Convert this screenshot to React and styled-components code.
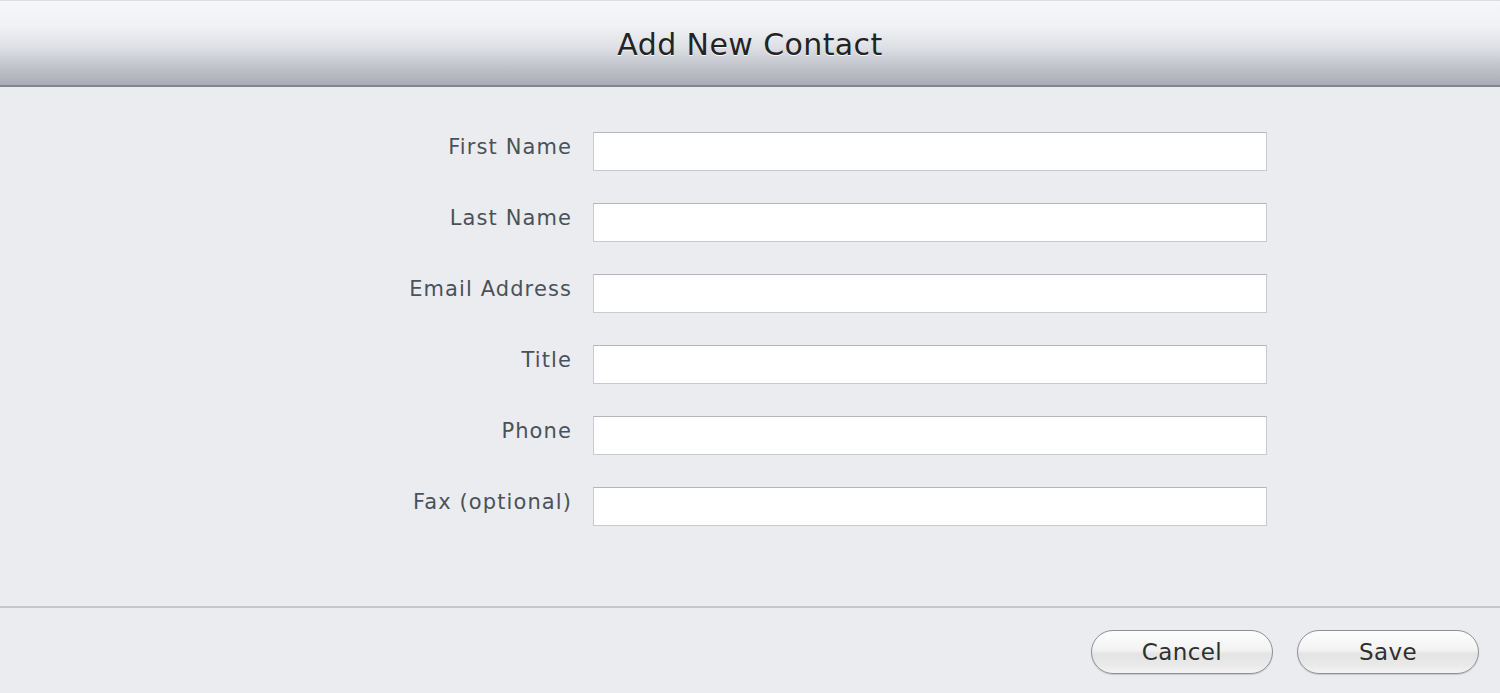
import React from 'react'
import styled, { createGlobalStyle } from 'styled-components'

const Global = createGlobalStyle`
  html, body {
    margin: 0;
    padding: 0;
    background: #ebecf0;
  }
  body {
    font-family: "DejaVu Sans", "Liberation Sans", sans-serif;
  }
`

const Page = styled.div`
  width: 1500px;
  height: 693px;
  display: flex;
  flex-direction: column;
  background: #ebecf0;
  overflow: hidden;
`

const Header = styled.header`
  height: 84px;
  flex: none;
  display: flex;
  align-items: center;
  justify-content: center;
  border-top: 1px solid #dcdde1;
  border-bottom: 2px solid #82858f;
  background: linear-gradient(to bottom, #f5f6f8 0%, #f1f2f5 30%, #dfe0e5 55%, #bfc1ca 80%, #a9acb7 100%);
`

const Title = styled.h1`
  margin: 0;
  font-size: 30px;
  font-weight: normal;
  color: #222325;
  letter-spacing: 0.4px;
  text-shadow: 0 1px 0 rgba(255, 255, 255, 0.9);
  transform: translateY(1px);
`

const Form = styled.form`
  flex: 1;
  display: grid;
  grid-template-columns: 571px 674px;
  column-gap: 22px;
  row-gap: 32px;
  align-content: start;
  padding-top: 45px;
`

const Label = styled.label`
  justify-self: end;
  font-size: 21px;
  letter-spacing: 1.1px;
  margin-right: -1px;
  color: #4b5159;
  padding-top: 3px;
  line-height: 24px;
`

const Input = styled.input`
  box-sizing: border-box;
  height: 39px;
  width: 674px;
  margin: 0;
  border: 1px solid #c9cacd;
  border-top-color: #b4b5b8;
  background: #ffffff;
  font-family: inherit;
  font-size: 18px;
  padding: 0 8px;
  outline: none;
`

const Footer = styled.footer`
  height: 87px;
  flex: none;
  box-sizing: border-box;
  border-top: 2px solid #c5c6ca;
  display: flex;
  align-items: flex-start;
  justify-content: flex-end;
  gap: 24px;
  padding: 22px 21px 0 0;
`

const Button = styled.button`
  box-sizing: border-box;
  width: 182px;
  height: 44px;
  border-radius: 22px;
  border: 1px solid #8f9093;
  background: linear-gradient(to bottom, #fdfdfd 0%, #f3f3f3 45%, #e4e4e4 55%, #e9e9e9 80%, #f4f4f4 100%);
  box-shadow: 0 1px 1px rgba(0, 0, 0, 0.15);
  font-family: "DejaVu Sans", "Liberation Sans", sans-serif;
  font-size: 23px;
  letter-spacing: 0.4px;
  color: #2e2f31;
  cursor: pointer;
  padding: 0;
`

const fields = ['First Name', 'Last Name', 'Email Address', 'Title', 'Phone', 'Fax (optional)']

export default function App() {
  return (
    <Page>
      <Global />
      <Header>
        <Title>Add New Contact</Title>
      </Header>
      <Form>
        {fields.map(f => (
          <React.Fragment key={f}>
            <Label>{f}</Label>
            <Input type="text" />
          </React.Fragment>
        ))}
      </Form>
      <Footer>
        <Button type="button">Cancel</Button>
        <Button type="button">Save</Button>
      </Footer>
    </Page>
  )
}
